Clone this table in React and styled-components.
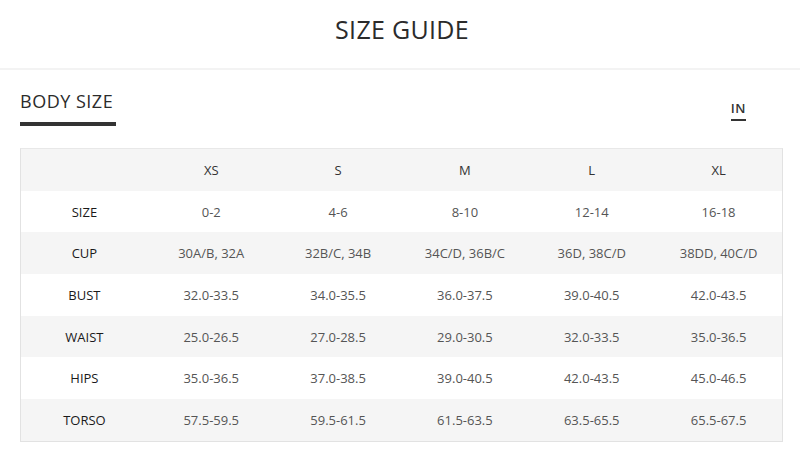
import React from "react";
import styled, { createGlobalStyle } from "styled-components";

const Global = createGlobalStyle`
  html, body { margin: 0; padding: 0; background: #fff; }
  body { font-family: "Open Sans", "Noto Sans", sans-serif; color: #333; }
`;

const Page = styled.div`
  width: 800px;
`;

const Header = styled.header`
  height: 70px;
  display: flex;
  justify-content: center;
  align-items: flex-start;
  padding-top: 14px;
  box-sizing: border-box;
  border-bottom: 2px solid #f3f3f3;
`;

const Title = styled.h1`
  margin: 0;
  font-size: 25px;
  line-height: 30px;
  font-weight: 400;
  letter-spacing: 0.3px;
  color: #2b2b2b;
  padding-left: 4px;
`;

const Content = styled.main`
  padding: 21px 17px 0 20px;
`;

const TabBar = styled.div`
  display: flex;
  justify-content: space-between;
  align-items: flex-start;
`;

const Tab = styled.div`
  font-size: 18px;
  line-height: 20px;
  letter-spacing: 0.5px;
  color: #2b2b2b;
  padding-bottom: 11px;
  border-bottom: 4px solid #333;
  width: 96px;
  white-space: nowrap;
`;

const Unit = styled.div`
  margin-top: 10px;
  margin-right: 37px;
  font-size: 13px;
  line-height: 15px;
  font-weight: 600;
  letter-spacing: 0.5px;
  color: #333;
  padding-bottom: 3px;
  border-bottom: 2px solid #333;
`;

const Table = styled.div`
  margin-top: 22px;
  border: 1px solid #e2e2e2;
  border-top-color: #e8e8e8;
`;

const Row = styled.div`
  display: grid;
  grid-template-columns: repeat(6, 1fr);
  height: 41.7px;
  align-items: center;
  background: ${(p) => (p.$shaded ? "#f5f5f5" : "#ffffff")};
`;

const Cell = styled.div`
  text-align: center;
  font-size: 13px;
  color: ${(p) => (p.$head ? "#333" : p.$label ? "#1a1a1a" : "#555")};
  font-weight: ${(p) => (p.$label ? 500 : 400)};
  white-space: nowrap;
`;

const sizes = ["XS", "S", "M", "L", "XL"];
const rows = [
  ["SIZE", ["0-2", "4-6", "8-10", "12-14", "16-18"]],
  ["CUP", ["30A/B, 32A", "32B/C, 34B", "34C/D, 36B/C", "36D, 38C/D", "38DD, 40C/D"]],
  ["BUST", ["32.0-33.5", "34.0-35.5", "36.0-37.5", "39.0-40.5", "42.0-43.5"]],
  ["WAIST", ["25.0-26.5", "27.0-28.5", "29.0-30.5", "32.0-33.5", "35.0-36.5"]],
  ["HIPS", ["35.0-36.5", "37.0-38.5", "39.0-40.5", "42.0-43.5", "45.0-46.5"]],
  ["TORSO", ["57.5-59.5", "59.5-61.5", "61.5-63.5", "63.5-65.5", "65.5-67.5"]],
];

export default function App() {
  return (
    <Page>
      <Global />
      <Header>
        <Title>SIZE GUIDE</Title>
      </Header>
      <Content>
        <TabBar>
          <Tab>BODY SIZE</Tab>
          <Unit>IN</Unit>
        </TabBar>
        <Table>
          <Row $shaded>
            <Cell $label />
            {sizes.map((s) => (
              <Cell key={s} $head>{s}</Cell>
            ))}
          </Row>
          {rows.map(([label, vals], i) => (
            <Row key={label} $shaded={i % 2 === 1}>
              <Cell $label>{label}</Cell>
              {vals.map((v, j) => (
                <Cell key={j}>{v}</Cell>
              ))}
            </Row>
          ))}
        </Table>
      </Content>
    </Page>
  );
}
